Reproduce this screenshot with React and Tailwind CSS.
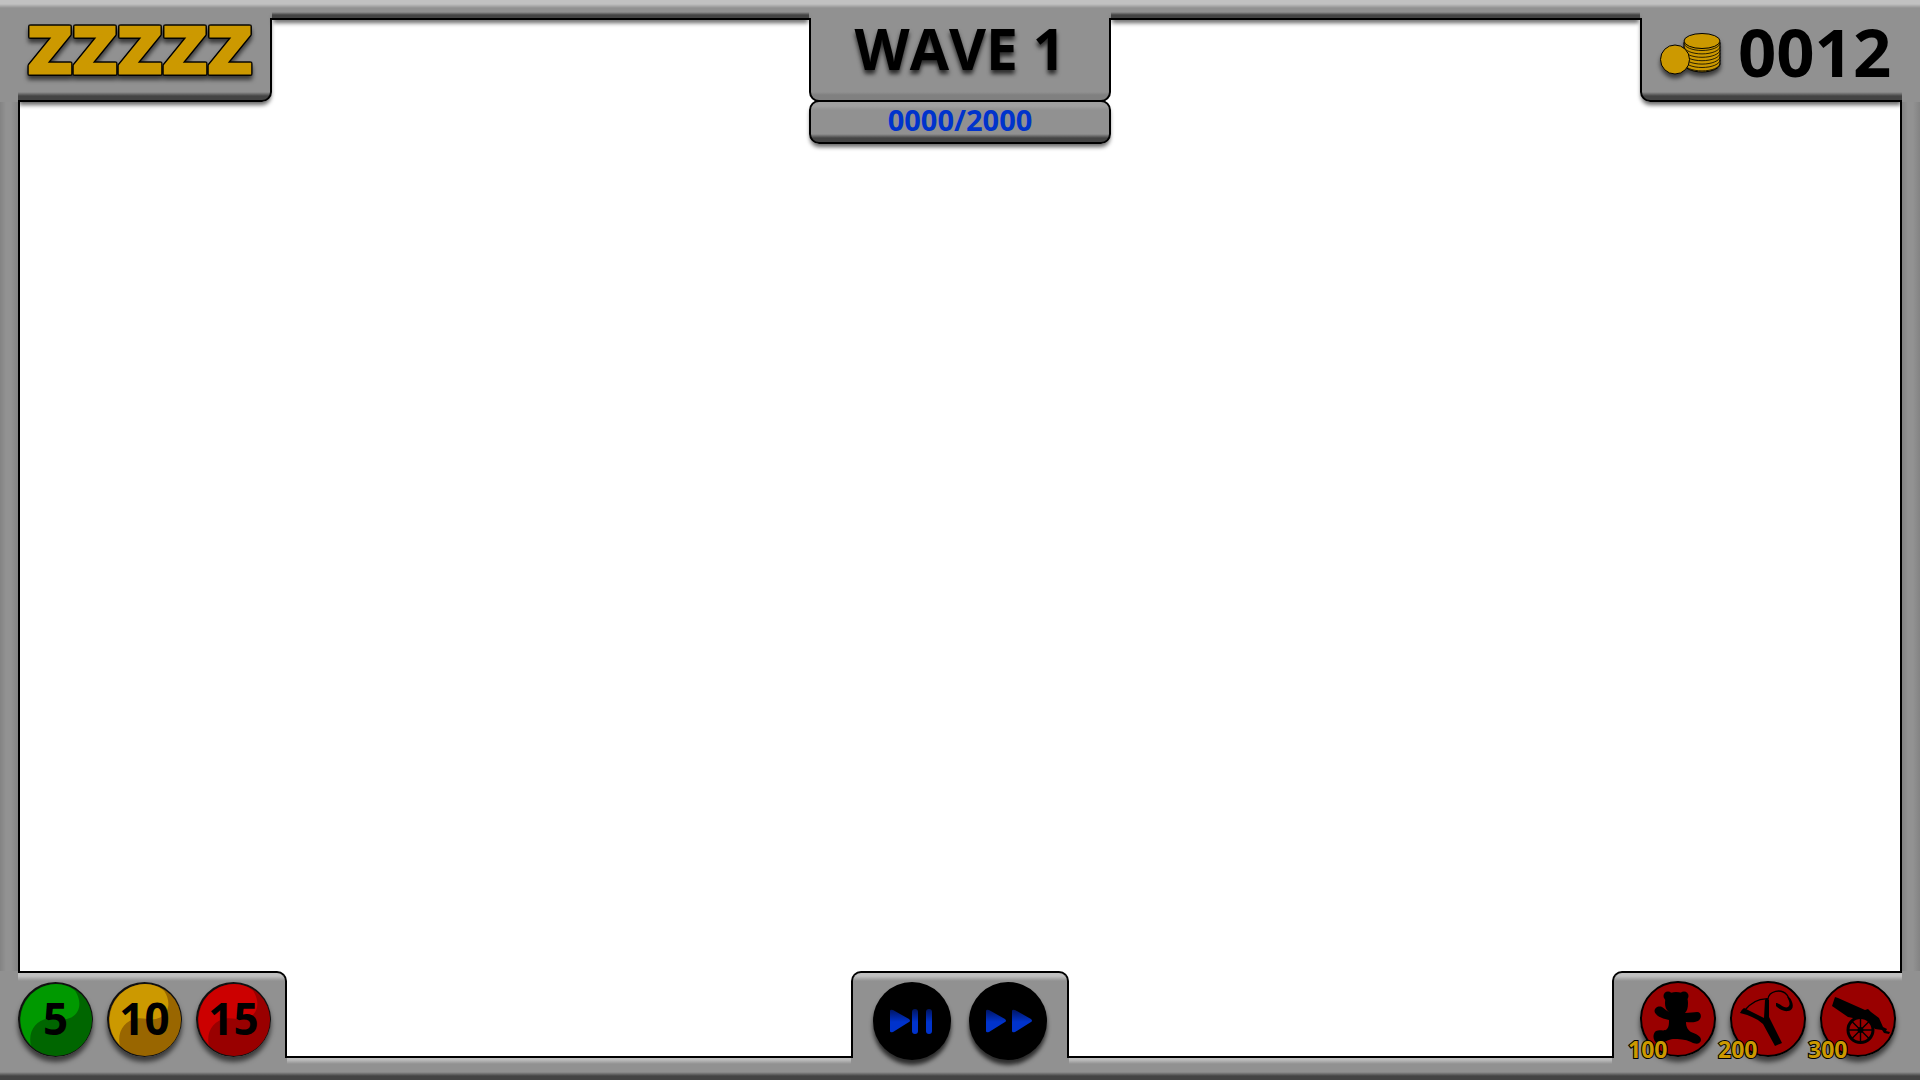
import React from "react";

const topBody =
  "bg-[linear-gradient(to_bottom,#919191_0,#919191_calc(100%-8px),#444_calc(100%-4px),#444_100%)]";
const bottomBody = "bg-[linear-gradient(to_bottom,#c1c1c1_0,#c1c1c1_3px,#919191_8px)]";
const dropShadow = "shadow-[0_4px_4px_-1px_rgba(0,0,0,0.6)]";
const rail = "bg-[linear-gradient(to_right,#838383_0,#929292_6px,#929292_11px,#838383_18px)]";

function TopStrip() {
  return (
    <div
      className={`-mt-1.5 h-2 flex-1 border-b-2 border-black bg-[linear-gradient(to_bottom,#919191_0,#444_3px,#444_100%)] ${dropShadow}`}
    />
  );
}

function BottomStrip() {
  return (
    <div className="relative -mb-1.5 h-2 flex-1 border-t-2 border-black bg-[linear-gradient(to_bottom,#c1c1c1_0,#bbb_2px,#919191_6px)]" />
  );
}

function Corner() {
  return <div className="relative w-[18px] self-stretch bg-[#919191]" />;
}

function Coins() {
  const edges = [0, 1, 2, 3, 4, 5, 6];
  return (
    <svg
      viewBox="0 0 64 48"
      className="h-12 w-16 overflow-visible drop-shadow-[0_4px_2px_rgba(0,0,0,0.6)]"
      fill="#cc9900"
      stroke="#000"
      aria-hidden="true"
    >
      <path d="M26 10v22c0 4 8 8 18 8s18-4 18-8V10z" />
      {edges.map((i) => (
        <path key={i} d={`M26 ${11 + i * 3.4}c0 4 8 7.5 18 7.5s18-3.500 18-7.500`} fill="none" strokeWidth="0.8" />
      ))}
      <ellipse cx="44" cy="9" rx="18" ry="7.500" />
      <circle cx="17" cy="27.500" r="14.500" />
    </svg>
  );
}

const waves = [
  { value: "5", light: "#009900", dark: "#006600" },
  { value: "10", light: "#cc9900", dark: "#996600" },
  { value: "15", light: "#cc0000", dark: "#990000" },
];

function OrbButton({ value, light, dark }) {
  return (
    <button
      type="button"
      className="relative grid size-[75px] place-items-center rounded-full text-[44px] leading-none font-bold text-black shadow-[0_5px_5px_rgba(0,0,0,0.6)]"
    >
      <svg viewBox="0 0 76 76" className="absolute inset-0 size-full" aria-hidden="true">
        <circle cx="38" cy="38" r="38" fill="#111" />
        <circle cx="38.500" cy="38.500" r="36.500" fill={dark} />
        <path
          d="M13 64A36.500 36.500 0 0 1 38.500 2C46 2 54 5 58 9C65 20 63 31 54 36C45 40 40 36 30 37C18 39 10 50 13 64Z"
          fill={light}
        />
      </svg>
      <span className="relative pb-1">{value}</span>
    </button>
  );
}

function Bear() {
  return (
    <g>
      <circle cx="28" cy="15" r="4.500" />
      <circle cx="44" cy="15" r="4.500" />
      <path d="M36 11C44 11 48 15 48 22C48 27 47 30 45 32C50 32 54 31 57 31C62 31 62 38 58 40C54 42 49 41 46 41C46 46 48 49 51 51C56 53 61 55 61 59C60 64 55 63 51 61C45 58 39 58 33 58C28 58 24 63 17 62C13 60 12 53 16 50C20 48 24 51 27 48C29 46 29 42 29 39C24 38 18 36 16 33C12 29 17 24 22 26C25 28 27 30 29 31C26 29 25 26 25 22C25 15 29 11 36 11Z" />
    </g>
  );
}

function Slingshot() {
  return (
    <g>
      <path d="M15 29C21 22 29 17 38 18M38 18C39 10 51 7 57 14L60 19" fill="none" stroke="#000" strokeWidth="1.300" />
      <path d="M35 19Q37 15 39 19L39 36L52 62L45 65L33 43Q24 35 10 32Q11 29 14 27L34 37Z" />
      <path d="M46 22C50 22 54 28 58 26C61 24 59 19 57 16L60 17C64 23 64 29 58 30C53 31 48 27 46 25Z" />
    </g>
  );
}

function Cannon() {
  return (
    <g>
      <path d="M15 16L18 17L45 29L48 28L51 31L59 37L63 46L67 48L66 50L70 51L69 53L64 52L62 49L55 48L50 42L38 38L28 36L12 25Z" />
      <circle cx="40.500" cy="49" r="12.500" fill="#990000" stroke="#000" strokeWidth="3" />
      <path
        d="M40.500 37V61M28 49H53M32 40.500L49 57.500M49 40.500L32 57.500"
        stroke="#000"
        strokeWidth="1.400"
      />
      <circle cx="40.500" cy="49" r="3" />
    </g>
  );
}

const items = [
  { name: "Bear", price: "100", Icon: Bear },
  { name: "Slingshot", price: "200", Icon: Slingshot },
  { name: "Cannon", price: "300", Icon: Cannon },
];

function ShopButton({ name, price, Icon }) {
  return (
    <button
      type="button"
      aria-label={`${name} ${price}`}
      className="relative size-[76px] rounded-full shadow-[0_5px_5px_rgba(0,0,0,0.6)]"
    >
      <svg viewBox="0 0 76 76" className="block size-full" aria-hidden="true">
        <circle cx="38" cy="38" r="37" fill="#990000" stroke="#000" strokeWidth="2" />
        <Icon />
      </svg>
      <span className="absolute -bottom-1 -left-3 text-[23px] leading-6 font-bold text-[#cc9900] [-webkit-text-stroke:2px_#000] [paint-order:stroke_fill]">
        {price}
      </span>
    </button>
  );
}

function ControlButton({ label, children }) {
  return (
    <button
      type="button"
      aria-label={label}
      className="size-[78px] rounded-full bg-black shadow-[0_5px_4px_rgba(0,0,0,0.7)]"
    >
      <svg viewBox="0 0 78 78" className="size-full" aria-hidden="true">
        <defs>
          <linearGradient id="glow" gradientUnits="userSpaceOnUse" x1="0" y1="26" x2="0" y2="40">
            <stop offset="0" stopColor="#001155" />
            <stop offset="1" stopColor="#0033cc" />
          </linearGradient>
        </defs>
        <g fill="url(#glow)">{children}</g>
      </svg>
    </button>
  );
}

export default function App() {
  return (
    <div className="flex min-h-screen flex-col bg-white font-['Open_Sans',sans-serif] text-black">
      <header>
        <div className="h-[18px] bg-[linear-gradient(to_bottom,#c1c1c1_0,#c1c1c1_4px,#919191_8px)]" />
        <div className="grid grid-cols-[1fr_302px_1fr]">
          <div className="flex items-start">
            <Corner />
            <div
              className={`flex h-[84px] w-[254px] justify-center rounded-br-[10px] border-r-2 border-b-2 border-black pr-2 ${topBody} ${dropShadow}`}
            >
              <span className="pt-0.5 font-['DejaVu_Sans',sans-serif] text-[62px] leading-[64px] font-bold text-[#cc9900] [-webkit-text-stroke:3px_#cc9900] [filter:drop-shadow(0_1px_0_#000)_drop-shadow(0_-1px_0_#000)_drop-shadow(1px_0_0_#000)_drop-shadow(-1px_0_0_#000)_drop-shadow(0_4px_2px_rgba(0,0,0,0.6))]">
                ZZZZZ
              </span>
            </div>
            <TopStrip />
          </div>
          <div className="-mb-11">
            <div className="relative h-[84px] rounded-b-[10px] border-x-2 border-b-2 border-black bg-[linear-gradient(to_bottom,#919191_0,#919191_calc(100%-8px),#808080_calc(100%-5px),#808080_100%)] text-center">
              <h1 className="text-[57px] leading-[60px] font-bold [text-shadow:0_4px_4px_rgba(0,0,0,0.7)]">
                WAVE 1
              </h1>
            </div>
            <div
              className={`relative -mt-0.5 h-11 rounded-[10px] border-2 border-black bg-[linear-gradient(to_bottom,#a0a0a0_0,#a0a0a0_4px,#919191_8px,#919191_calc(100%-8px),#444_calc(100%-4px),#444_100%)] text-center text-[29px] leading-9 font-bold text-[#0033cc] ${dropShadow}`}
            >
              0000/2000
            </div>
          </div>
          <div className="flex items-start">
            <TopStrip />
            <div
              className={`flex h-[84px] w-[262px] items-start gap-4 rounded-bl-[10px] border-b-2 border-l-2 border-black pl-4 ${topBody} ${dropShadow}`}
            >
              <div className="pt-3.5">
                <Coins />
              </div>
              <span className="text-[67px] leading-[66px] font-bold">0012</span>
            </div>
            <Corner />
          </div>
        </div>
      </header>

      <main className="relative flex flex-1 justify-between">
        <div className={`w-5 border-r-2 border-black ${rail}`} />
        <div className={`w-5 border-l-2 border-black ${rail}`} />
      </main>

      <footer>
        <div className="grid grid-cols-[1fr_218px_1fr]">
          <div className="flex items-end">
            <Corner />
            <div
              className={`relative z-10 flex h-[87px] w-[269px] gap-[14px] rounded-tr-[10px] border-t-2 border-r-2 border-black pt-[9px] ${bottomBody}`}
            >
              {waves.map((w) => (
                <OrbButton key={w.value} {...w} />
              ))}
            </div>
            <BottomStrip />
          </div>
          <div
            className={`relative z-10 flex h-[87px] justify-center gap-[18px] rounded-t-[10px] border-x-2 border-t-2 border-black pt-[9px] ${bottomBody}`}
          >
            <ControlButton label="Play or pause">
              <path d="M17 29Q17 27 20 28L36 37Q38 39 36 40L20 50Q17 51 17 49Z" />
              <rect x="39" y="27" width="6" height="25" rx="3" />
              <rect x="53" y="27" width="6" height="25" rx="3" />
            </ControlButton>
            <ControlButton label="Fast forward">
              <path d="M17 29Q17 27 20 28L36 37Q38 39 36 40L20 50Q17 51 17 49Z" />
              <path d="M43 29Q43 27 46 28L62 37Q64 39 62 40L46 50Q43 51 43 49Z" />
            </ControlButton>
          </div>
          <div className="flex items-end">
            <BottomStrip />
            <div
              className={`relative z-10 flex h-[87px] w-[290px] gap-[14px] rounded-tl-[10px] border-t-2 border-l-2 border-black pt-2 pl-[26px] ${bottomBody}`}
            >
              {items.map((item) => (
                <ShopButton key={item.name} {...item} />
              ))}
            </div>
            <Corner />
          </div>
        </div>
        <div className="h-[22px] bg-[linear-gradient(to_top,#444_0,#444_4px,#919191_8px)]" />
      </footer>
    </div>
  );
}
